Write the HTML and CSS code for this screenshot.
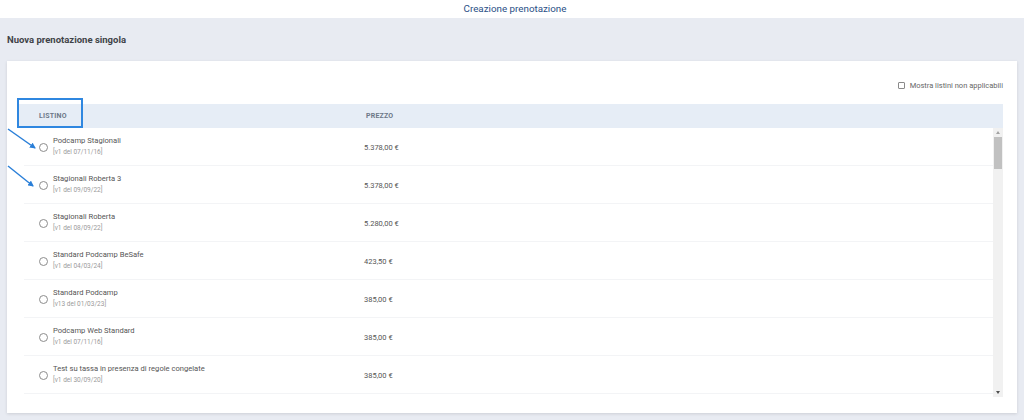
FILE: index.html
```html
<!DOCTYPE html>
<html lang="it">
<head>
<meta charset="utf-8">
<title>Creazione prenotazione</title>
<link rel="stylesheet" href="styles.css">
</head>
<body>
<header class="topbar">Creazione prenotazione</header>
<main class="main">
  <h1 class="page-title">Nuova prenotazione singola</h1>
  <section class="card">
    <div class="toolbar">
      <label class="check"><span class="check-box"></span>Mostra listini non applicabili</label>
    </div>
    <div class="table">
      <div class="thead">
        <div class="th th-name">LISTINO</div>
        <div class="th th-price">PREZZO</div>
      </div>
      <div class="tbody-wrap">
        <div class="tbody">
          <div class="row"><span class="radio"></span><div class="cell-name"><div class="name">Podcamp Stagionali</div><div class="sub">[v1 del 07/11/16]</div></div><div class="price">5.378,00 €</div></div>
          <div class="row"><span class="radio"></span><div class="cell-name"><div class="name">Stagionali Roberta 3</div><div class="sub">[v1 del 09/09/22]</div></div><div class="price">5.378,00 €</div></div>
          <div class="row"><span class="radio"></span><div class="cell-name"><div class="name">Stagionali Roberta</div><div class="sub">[v1 del 08/09/22]</div></div><div class="price">5.280,00 €</div></div>
          <div class="row"><span class="radio"></span><div class="cell-name"><div class="name">Standard Podcamp BeSafe</div><div class="sub">[v1 del 04/03/24]</div></div><div class="price">423,50 €</div></div>
          <div class="row"><span class="radio"></span><div class="cell-name"><div class="name">Standard Podcamp</div><div class="sub">[v13 del 01/03/23]</div></div><div class="price">385,00 €</div></div>
          <div class="row"><span class="radio"></span><div class="cell-name"><div class="name">Podcamp Web Standard</div><div class="sub">[v1 del 07/11/16]</div></div><div class="price">385,00 €</div></div>
          <div class="row"><span class="radio"></span><div class="cell-name"><div class="name">Test su tassa in presenza di regole congelate</div><div class="sub">[v1 del 30/09/20]</div></div><div class="price">385,00 €</div></div>
        </div>
        <div class="scrollbar">
          <span class="sb-arrow sb-up"></span>
          <span class="sb-track"><span class="sb-thumb"></span></span>
          <span class="sb-arrow sb-down"></span>
        </div>
      </div>
    </div>
  </section>
</main>
<div class="highlight-box"></div>
<svg class="arrows" width="60" height="200" viewBox="0 0 60 200">
  <defs>
    <marker id="ah" markerWidth="6" markerHeight="6" refX="5" refY="3" orient="auto" markerUnits="userSpaceOnUse">
      <path d="M0,0 L6,3 L0,6 Z" fill="#2a7fd8"/>
    </marker>
  </defs>
  <line x1="8" y1="129" x2="35" y2="148" stroke="#2a7fd8" stroke-width="1.5" marker-end="url(#ah)"/>
  <line x1="8" y1="166" x2="33" y2="186" stroke="#2a7fd8" stroke-width="1.5" marker-end="url(#ah)"/>
</svg>
</body>
</html>
```

FILE: styles.css
```css
* { box-sizing: border-box; }
html, body { margin: 0; padding: 0; }
body {
  width: 1024px;
  height: 420px;
  overflow: hidden;
  background: #e8ebf2;
  font-family: Roboto, "Liberation Sans", Arial, sans-serif;
  color: #444;
  position: relative;
}
.topbar {
  height: 18px;
  background: #fff;
  color: #2a4f86;
  font-size: 9.8px;
  line-height: 17px;
  text-align: center;
  padding-left: 6px;
}
.main {
  padding: 0 7px;
}
.page-title {
  margin: 0;
  height: 43px;
  font-size: 9.5px;
  font-weight: 700;
  color: #3f4348;
  line-height: 44px;
}
.card {
  background: #fff;
  height: 352px;
  padding: 0 14px 16px 10px;
  box-shadow: 0 1px 3px rgba(0,0,0,0.12);
  display: flex;
  flex-direction: column;
}
.toolbar {
  height: 43px;
  display: flex;
  justify-content: flex-end;
  align-items: center;
  padding-top: 5px;
}
.check {
  display: flex;
  align-items: center;
  gap: 5px;
  font-size: 7.5px;
  color: #666;
}
.check-box {
  width: 7px;
  height: 7px;
  border: 1px solid #8a8a8a;
  border-radius: 1px;
}
.table { flex: 1; display: flex; flex-direction: column; }
.thead {
  height: 24px;
  background: #e6edf6;
  display: flex;
  align-items: center;
  font-size: 7px;
  font-weight: 700;
  color: #6d7888;
  letter-spacing: 0.2px;
}
.th-name { width: 349px; padding-left: 22px; }
.th-price { padding-left: 0; }
.tbody-wrap {
  flex: 1;
  display: flex;
  overflow: hidden;
}
.tbody { flex: 1; }
.row {
  height: 38px;
  margin-left: 7px;
  border-bottom: 1px solid #f3f4f6;
  display: flex;
  align-items: center;
}
.radio {
  width: 9px;
  height: 9px;
  border: 1px solid #8d8d8d;
  border-radius: 50%;
  margin-left: 15px;
  margin-top: 2px;
  flex: none;
}
.cell-name {
  width: 310px;
  margin-left: 5px;
  padding-bottom: 2px;
}
.name { font-size: 7.6px; color: #555; line-height: 11px; }
.sub { font-size: 6.5px; color: #9a9a9a; line-height: 10px; margin-top: 1px; }
.price { font-size: 7.5px; color: #555; margin-left: 1px; margin-top: 2px; }
.scrollbar {
  width: 10px;
  display: flex;
  flex-direction: column;
  background: #f1f1f1;
  align-items: center;
}
.sb-arrow { width: 0; height: 0; border-left: 2px solid transparent; border-right: 2px solid transparent; margin: 3px 0; }
.sb-up { border-bottom: 3px solid #a3a3a3; }
.sb-down { border-top: 3px solid #505050; }
.sb-track { flex: 1; width: 100%; }
.sb-thumb { display: block; width: 8px; margin: 0 auto; height: 32px; background: #c1c1c1; }
.highlight-box {
  position: absolute;
  left: 17px;
  top: 98px;
  width: 66px;
  height: 30px;
  border: 2px solid #2f87e0;
}
.arrows {
  position: absolute;
  left: 0;
  top: 0;
  overflow: visible;
}
```
